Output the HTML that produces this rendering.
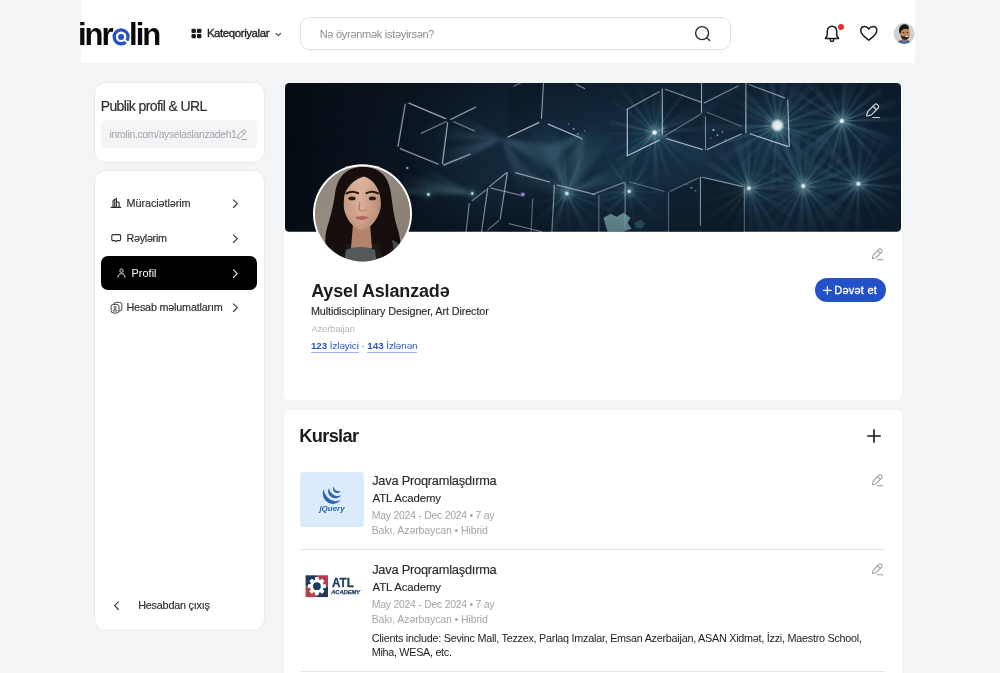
<!DOCTYPE html>
<html lang="az">
<head>
<meta charset="utf-8">
<title>inrolin – Profil</title>
<style>
*{box-sizing:border-box;margin:0;padding:0}
html,body{width:1000px;height:673px;overflow:hidden;background:#f3f4f6}
body{font-family:"Liberation Sans",sans-serif;color:#1f1f1f;position:relative}
#app{position:absolute;left:0;top:0;width:1000px;height:673px;will-change:transform}
.abs{position:absolute}
svg{position:absolute;overflow:visible}
.t{position:absolute;white-space:nowrap;line-height:1;transform-origin:0 0}
header{position:absolute;left:80.5px;top:0;width:834.5px;height:62.8px;background:#fff}
.search{position:absolute;left:300px;top:17px;width:431px;height:33px;border:1px solid #dfe0e3;border-radius:9px;background:#fff}
.card{position:absolute;background:#fff;border-radius:6px}
.side{border:1px solid #e9eaee;border-radius:12px}
.g{color:#a3a4a8}
.d{color:#2b2b2b;-webkit-text-stroke:0.15px #2b2b2b}
a{color:#2453c9;text-decoration:none;border-bottom:1px solid #9db3ea;padding-bottom:1px}
a b{font-weight:700}
.ic{fill:none;stroke:#2b2b2b;stroke-width:1.1;stroke-linecap:round;stroke-linejoin:round}
</style>
</head>
<body>
<div id="app">
<header></header>

<!-- ===== header content ===== -->
<div class="t" id="logo" style="left:78px;top:19px;font-size:31px;font-weight:700;color:#0a0a0d;letter-spacing:-2px"><span id="lg1">inr</span><span id="lg2" style="color:#2352cb;letter-spacing:0;margin:0 -1.1px 0 -0.4px">o</span><span id="lg3">lin</span></div>
<svg id="logo-o" style="left:111px;top:27px" width="20" height="20" viewBox="0 0 20 20">
  <circle cx="10.1" cy="9.8" r="9.6" fill="#fff"/>
  <circle cx="10.1" cy="9.8" r="6.95" fill="none" stroke="#2352cb" stroke-width="3.3"/>
  <path d="M13.80 13.01 L18.02 16.69" stroke="#fff" stroke-width="2.1"/>
  <circle cx="10.1" cy="9.9" r="3" fill="#2352cb"/>
</svg>
<svg style="left:191px;top:28px" width="11" height="11" viewBox="0 0 11 11">
  <rect x="0.5" y="0.7" width="4.4" height="4.2" rx="0.9" fill="#1a1a1a"/>
  <rect x="6" y="0.7" width="4.4" height="4.2" rx="0.9" fill="#1a1a1a"/>
  <rect x="0.5" y="6" width="4.4" height="4.2" rx="0.9" fill="#1a1a1a"/>
  <rect x="6" y="6" width="4.4" height="4.2" rx="0.9" fill="#1a1a1a"/>
</svg>
<div class="t" id="kat" style="left:206.9px;top:28px;font-size:11.4px;font-weight:400;-webkit-text-stroke:0.35px #222;color:#222;letter-spacing:-0.38px">Kateqoriyalar</div>
<svg style="left:275px;top:31.5px" width="7" height="5" viewBox="0 0 7 5"><path class="ic" d="M1 1.4 L3.3 3.7 L5.6 1.4" style="stroke:#444"/></svg>
<div class="search"></div>
<div class="t" id="ph" style="left:319.7px;top:29px;font-size:11.1px;color:#8e8e92;letter-spacing:-0.33px">Nə öyrənmək istəyirsən?</div>
<svg style="left:694px;top:25px" width="18" height="18" viewBox="0 0 18 18">
  <circle cx="8.1" cy="8.1" r="6.5" fill="none" stroke="#2b2b2b" stroke-width="1.4"/>
  <path d="M13.3 13.3 L15.6 15.4" stroke="#2b2b2b" stroke-width="1.4" stroke-linecap="round"/>
</svg>
<!-- bell -->
<svg style="left:823px;top:24px" width="18" height="20" viewBox="0 0 18 20">
  <path d="M9 2.3 C5.9 2.3 4.3 4.6 4.3 7.4 L4.3 10.6 C4.3 12.2 3.4 13.4 2.4 14.4 L15.6 14.4 C14.6 13.4 13.7 12.2 13.7 10.6 L13.7 7.4 C13.7 4.6 12.1 2.3 9 2.3 Z" fill="none" stroke="#1a1a1a" stroke-width="1.5" stroke-linejoin="round"/>
  <path d="M7.2 15.6 C7.4 16.9 8.1 17.5 9 17.5 C9.9 17.5 10.6 16.9 10.8 15.6" fill="none" stroke="#1a1a1a" stroke-width="1.5" stroke-linecap="round"/>
</svg>
<div class="abs" style="left:838px;top:24px;width:6px;height:6px;border-radius:50%;background:#e8302a"></div>
<!-- heart -->
<svg style="left:859px;top:24px" width="20" height="18" viewBox="0 0 20 18">
  <path d="M9.8 16.2 C6.5 13.6 1.8 10.4 1.8 6.4 C1.8 3.9 3.6 2.4 5.6 2.4 C7.3 2.4 8.8 3.3 9.8 5 C10.8 3.3 12.3 2.4 14 2.4 C16 2.4 17.8 3.9 17.8 6.4 C17.8 10.4 13.1 13.6 9.8 16.2 Z" fill="none" stroke="#1a1a1a" stroke-width="1.5" stroke-linejoin="round"/>
</svg>
<!-- header avatar -->
<svg style="left:893px;top:23px" width="22" height="22" viewBox="0 0 22 22">
  <defs><clipPath id="ca"><circle cx="11.2" cy="10.55" r="10.5"/></clipPath>
  <filter id="sf2" x="-20%" y="-20%" width="140%" height="140%"><feGaussianBlur stdDeviation="0.5"/></filter></defs>
  <g clip-path="url(#ca)">
    <rect width="22" height="22" fill="#cfd0cc"/>
    <g filter="url(#sf2)">
      <path d="M3.5 22 C4.5 17.6 8 16.6 11 16.8 C14.5 16.6 17.5 17.6 19 22 Z" fill="#466aa6"/>
      <path d="M9 14 L14 14.5 L14 18 C12.5 19 10 18.6 9 17.6 Z" fill="#a9744f"/>
      <ellipse cx="12.2" cy="10.8" rx="4.7" ry="5.8" fill="#bd875f"/>
      <path d="M7.4 11.5 C8 15 9.5 16.8 12 16.8 C14 16.8 15.6 15.6 16.4 13.4 C15 14.6 13 14.4 11.6 13.2 C10.4 14 8.6 13.4 7.4 11.5 Z" fill="#2a1d17"/>
      <path d="M12 13.4 C13.2 14.4 15 14.2 16 13 C15 13 13 13 12 13.4 Z" fill="#f2ebe6"/>
      <path d="M6.6 10.6 C5 5.6 7.4 1.4 11.4 1.2 C14.6 1 16.4 3.4 15.8 6.8 C14.4 5.6 12.4 5.6 10.4 6.2 C8.8 6.8 7.8 8.4 7.6 10.8 Z" fill="#17130f"/>
      <ellipse cx="10.6" cy="9.4" rx="0.9" ry="0.5" fill="#2a1d17"/>
      <ellipse cx="14.4" cy="9.6" rx="0.9" ry="0.5" fill="#2a1d17"/>
    </g>
  </g>
</svg>

<!-- ===== sidebar ===== -->
<div class="card side" style="left:94px;top:82px;width:171px;height:81px"></div>
<div class="t d" id="pub" style="left:100.7px;top:99px;font-size:14px;letter-spacing:-0.6px">Publik profil &amp; URL</div>
<div class="abs" style="left:101px;top:120px;width:156px;height:28px;background:#f3f4f6;border-radius:5px"></div>
<div class="t g" id="url" style="left:109.5px;top:130px;font-size:10.4px;letter-spacing:-0.33px">inrolin.com/ayselaslanzadeh1</div>
<svg class="pen" style="left:236.4px;top:128.6px" width="11.6" height="11.6" viewBox="0 0 15 15"><use href="#pencil" stroke="#98989b"/></svg>

<div class="card side" style="left:94px;top:170px;width:171px;height:461px"></div>
<!-- menu 1 -->
<svg style="left:110px;top:197px" width="12" height="12" viewBox="0 0 12 12">
  <path class="ic" d="M1.2 10.4 H10.8 M3 10.2 V3.4 L6.4 1.4 V10.2 M4.7 2.6 V10.2 M6.4 4.6 L9.1 5.6 V10.2"/>
</svg>
<div class="t d" id="m1" style="left:126.6px;top:198px;font-size:10.8px;letter-spacing:-0.07px">Müraciətlərim</div>
<svg style="left:232px;top:199px" width="7" height="10" viewBox="0 0 7 10"><path class="ic" d="M1.4 0.9 L5.3 4.7 L1.4 8.5" style="stroke:#333"/></svg>
<!-- menu 2 -->
<svg style="left:110px;top:233px" width="12" height="11" viewBox="0 0 12 11">
  <path class="ic" d="M3 1.6 H9.4 C10.2 1.6 10.6 2 10.6 2.8 V6.4 C10.6 7.2 10.2 7.6 9.4 7.6 H7.3 L6.2 8.7 L5.1 7.6 H3 C2.2 7.6 1.8 7.2 1.8 6.4 V2.8 C1.8 2 2.2 1.6 3 1.6 Z"/>
</svg>
<div class="t d" id="m2" style="left:126.5px;top:233px;font-size:10.8px;letter-spacing:-0.3px">Rəylərim</div>
<svg style="left:232px;top:234px" width="7" height="10" viewBox="0 0 7 10"><path class="ic" d="M1.4 0.9 L5.3 4.7 L1.4 8.5" style="stroke:#333"/></svg>
<!-- menu 3 active -->
<div class="abs" style="left:101px;top:256px;width:156px;height:34px;border-radius:7px;background:#000"></div>
<svg style="left:116px;top:268px" width="11" height="11" viewBox="0 0 11 11">
  <circle cx="5.5" cy="2.7" r="1.7" fill="none" stroke="#fff" stroke-width="0.9"/>
  <path d="M1.9 9.2 C1.9 7 3.4 5.7 5.5 5.7 C7.6 5.7 9.1 7 9.1 9.2" fill="none" stroke="#fff" stroke-width="0.9" stroke-linecap="round"/>
</svg>
<div class="t" id="m3" style="left:131.6px;top:268px;font-size:10.8px;color:#fff;letter-spacing:0.06px">Profil</div>
<svg style="left:232px;top:268.5px" width="7" height="10" viewBox="0 0 7 10"><path class="ic" d="M1.4 0.9 L5.3 4.7 L1.4 8.5" style="stroke:#f0f0f0"/></svg>
<!-- menu 4 -->
<svg style="left:110px;top:301px" width="13" height="13" viewBox="0 0 13 13">
  <rect x="3.9" y="1.4" width="7.9" height="8.6" rx="2.3" fill="none" stroke="#2b2b2b" stroke-width="0.9"/>
  <rect x="1.1" y="3.4" width="7.9" height="8.6" rx="2.3" fill="#fff" stroke="#2b2b2b" stroke-width="0.9"/>
  <circle cx="5.05" cy="6.4" r="1.05" fill="none" stroke="#2b2b2b" stroke-width="0.8"/>
  <path d="M3.1 10 C3.3 8.7 4.1 8.3 5.05 8.3 C6 8.3 6.8 8.7 7 10 Z" fill="none" stroke="#2b2b2b" stroke-width="0.8" stroke-linejoin="round"/>
</svg>
<div class="t d" id="m4" style="left:126.5px;top:302px;font-size:10.8px;letter-spacing:-0.2px">Hesab məlumatlarım</div>
<svg style="left:232px;top:303px" width="7" height="10" viewBox="0 0 7 10"><path class="ic" d="M1.4 0.9 L5.3 4.7 L1.4 8.5" style="stroke:#333"/></svg>
<!-- logout -->
<svg style="left:113px;top:601px" width="7" height="10" viewBox="0 0 7 10"><path class="ic" d="M5.4 0.9 L1.6 4.7 L5.4 8.5" style="stroke:#333"/></svg>
<div class="t d" id="out" style="left:138.2px;top:600px;font-size:10.8px;letter-spacing:-0.2px">Hesabdan çıxış</div>

<!-- ===== profile card ===== -->
<div class="card" style="left:284px;top:90px;width:617.8px;height:310px;border-radius:0 0 5px 5px"></div>
<svg id="banner" style="left:284.6px;top:83px;border-radius:4.5px;overflow:hidden" width="616.3" height="148.7" viewBox="0 0 617 149" preserveAspectRatio="none">
<defs>
<linearGradient id="bg" x1="0" y1="0" x2="1" y2="0"><stop offset="0" stop-color="#060b12"/><stop offset="0.12" stop-color="#09121c"/><stop offset="0.28" stop-color="#0d1a29"/><stop offset="0.5" stop-color="#112336"/><stop offset="0.8" stop-color="#13273b"/><stop offset="1" stop-color="#0e1f31"/></linearGradient>
<radialGradient id="gl"><stop offset="0" stop-color="#d5f3f6" stop-opacity="0.85"/><stop offset="0.1" stop-color="#7cc0cc" stop-opacity="0.45"/><stop offset="0.35" stop-color="#3f8496" stop-opacity="0.14"/><stop offset="1" stop-color="#2a6074" stop-opacity="0"/></radialGradient>
<radialGradient id="ray"><stop offset="0" stop-color="#a8dbe3" stop-opacity="0.5"/><stop offset="0.35" stop-color="#5fa3b4" stop-opacity="0.22"/><stop offset="1" stop-color="#3d7d90" stop-opacity="0"/></radialGradient>
<radialGradient id="core"><stop offset="0" stop-color="#fff"/><stop offset="0.55" stop-color="#f4fbfc" stop-opacity="0.95"/><stop offset="1" stop-color="#bfe6ec" stop-opacity="0"/></radialGradient>
<radialGradient id="haze"><stop offset="0" stop-color="#27506a" stop-opacity="0.5"/><stop offset="1" stop-color="#27506a" stop-opacity="0"/></radialGradient>
<linearGradient id="vg" x1="0" y1="0" x2="0" y2="1"><stop offset="0" stop-color="#060d15" stop-opacity="0.25"/><stop offset="0.4" stop-color="#060d15" stop-opacity="0"/><stop offset="1" stop-color="#060d15" stop-opacity="0.3"/></linearGradient>
</defs>
<rect width="617" height="149" fill="url(#bg)"/>
<ellipse cx="430" cy="70" rx="150" ry="100" fill="url(#haze)" opacity="0.3"/>
<ellipse cx="380" cy="75" rx="110" ry="90" fill="url(#haze)" opacity="0.4"/>
<ellipse cx="535" cy="80" rx="100" ry="100" fill="url(#haze)" opacity="0.06"/>
<ellipse cx="250" cy="65" rx="130" ry="90" fill="url(#haze)" opacity="0.5"/>
<ellipse cx="290" cy="110" rx="110" ry="60" fill="url(#haze)" opacity="0.35"/>
<ellipse cx="200" cy="100" rx="70" ry="50" fill="url(#haze)" opacity="0.3"/>
<defs>
<radialGradient id="r493" gradientUnits="userSpaceOnUse" cx="493" cy="42.5" r="82"><stop offset="0" stop-color="#c5ecf1" stop-opacity="0.8"/><stop offset="0.22" stop-color="#5f9fb3" stop-opacity="0.3"/><stop offset="1" stop-color="#3a7088" stop-opacity="0"/></radialGradient>
<radialGradient id="r370" gradientUnits="userSpaceOnUse" cx="370" cy="49.6" r="72"><stop offset="0" stop-color="#c5ecf1" stop-opacity="0.8"/><stop offset="0.22" stop-color="#5f9fb3" stop-opacity="0.3"/><stop offset="1" stop-color="#3a7088" stop-opacity="0"/></radialGradient>
<radialGradient id="r557" gradientUnits="userSpaceOnUse" cx="557.5" cy="38.1" r="72"><stop offset="0" stop-color="#c5ecf1" stop-opacity="0.8"/><stop offset="0.22" stop-color="#5f9fb3" stop-opacity="0.3"/><stop offset="1" stop-color="#3a7088" stop-opacity="0"/></radialGradient>
<radialGradient id="r464" gradientUnits="userSpaceOnUse" cx="464.5" cy="105.4" r="68"><stop offset="0" stop-color="#c5ecf1" stop-opacity="0.8"/><stop offset="0.22" stop-color="#5f9fb3" stop-opacity="0.3"/><stop offset="1" stop-color="#3a7088" stop-opacity="0"/></radialGradient>
<radialGradient id="r518" gradientUnits="userSpaceOnUse" cx="518.8" cy="103.2" r="73"><stop offset="0" stop-color="#c5ecf1" stop-opacity="0.8"/><stop offset="0.22" stop-color="#5f9fb3" stop-opacity="0.3"/><stop offset="1" stop-color="#3a7088" stop-opacity="0"/></radialGradient>
<radialGradient id="r574" gradientUnits="userSpaceOnUse" cx="574" cy="101" r="66"><stop offset="0" stop-color="#c5ecf1" stop-opacity="0.8"/><stop offset="0.22" stop-color="#5f9fb3" stop-opacity="0.3"/><stop offset="1" stop-color="#3a7088" stop-opacity="0"/></radialGradient>
<radialGradient id="r344" gradientUnits="userSpaceOnUse" cx="344.6" cy="108.5" r="46"><stop offset="0" stop-color="#c5ecf1" stop-opacity="0.8"/><stop offset="0.22" stop-color="#5f9fb3" stop-opacity="0.3"/><stop offset="1" stop-color="#3a7088" stop-opacity="0"/></radialGradient>
<radialGradient id="r282" gradientUnits="userSpaceOnUse" cx="282.1" cy="110.7" r="55"><stop offset="0" stop-color="#c5ecf1" stop-opacity="0.8"/><stop offset="0.22" stop-color="#5f9fb3" stop-opacity="0.3"/><stop offset="1" stop-color="#3a7088" stop-opacity="0"/></radialGradient>
</defs>
<filter id="bl" x="-5%" y="-20%" width="110%" height="140%"><feGaussianBlur stdDeviation="0.6"/></filter>
<g filter="url(#bl)">
<circle cx="493" cy="42.5" r="44" fill="url(#gl)"/>
<path d="M493.0 42.5L574.6 36.4L574.8 43.7Z" fill="url(#r493)" opacity="0.34"/>
<path d="M493.0 42.5L546.6 55.2L544.8 61.4Z" fill="url(#r493)" opacity="0.60"/>
<path d="M493.0 42.5L543.6 65.6L540.3 71.8Z" fill="url(#r493)" opacity="0.35"/>
<path d="M493.0 42.5L535.3 82.3L527.6 89.1Z" fill="url(#r493)" opacity="0.43"/>
<path d="M493.0 42.5L530.8 111.2L516.9 117.2Z" fill="url(#r493)" opacity="0.54"/>
<path d="M493.0 42.5L502.0 133.2L495.1 133.6Z" fill="url(#r493)" opacity="0.47"/>
<path d="M493.0 42.5L490.4 108.8L484.8 108.4Z" fill="url(#r493)" opacity="0.79"/>
<path d="M493.0 42.5L468.9 120.1L457.9 115.8Z" fill="url(#r493)" opacity="0.52"/>
<path d="M493.0 42.5L458.2 85.3L454.9 82.4Z" fill="url(#r493)" opacity="0.42"/>
<path d="M493.0 42.5L438.1 80.3L433.8 73.1Z" fill="url(#r493)" opacity="0.65"/>
<path d="M493.0 42.5L410.0 72.6L407.3 63.4Z" fill="url(#r493)" opacity="0.72"/>
<path d="M493.0 42.5L417.4 51.3L416.9 40.3Z" fill="url(#r493)" opacity="0.83"/>
<path d="M493.0 42.5L399.9 16.6L403.2 6.8Z" fill="url(#r493)" opacity="0.37"/>
<path d="M493.0 42.5L440.2 15.5L445.5 7.0Z" fill="url(#r493)" opacity="0.59"/>
<path d="M493.0 42.5L426.5 -13.4L436.1 -23.1Z" fill="url(#r493)" opacity="0.64"/>
<path d="M493.0 42.5L458.9 -34.0L467.5 -37.3Z" fill="url(#r493)" opacity="0.66"/>
<path d="M493.0 42.5L475.6 -46.1L487.2 -47.6Z" fill="url(#r493)" opacity="0.87"/>
<path d="M493.0 42.5L496.3 -12.6L504.9 -11.4Z" fill="url(#r493)" opacity="0.72"/>
<path d="M493.0 42.5L524.0 -41.4L540.0 -33.6Z" fill="url(#r493)" opacity="0.47"/>
<path d="M493.0 42.5L523.9 -1.2L530.4 4.2Z" fill="url(#r493)" opacity="0.58"/>
<path d="M493.0 42.5L536.2 8.2L539.0 12.0Z" fill="url(#r493)" opacity="0.76"/>
<path d="M493.0 42.5L557.6 15.2L560.0 21.9Z" fill="url(#r493)" opacity="0.82"/>
<circle cx="370" cy="49.6" r="32" fill="url(#gl)"/>
<path d="M370.0 49.6L436.2 40.0L436.9 48.6Z" fill="url(#r370)" opacity="0.83"/>
<path d="M370.0 49.6L424.1 65.3L420.4 74.9Z" fill="url(#r370)" opacity="0.55"/>
<path d="M370.0 49.6L442.3 90.0L433.7 102.6Z" fill="url(#r370)" opacity="0.39"/>
<path d="M370.0 49.6L406.8 89.9L402.6 93.4Z" fill="url(#r370)" opacity="0.59"/>
<path d="M370.0 49.6L385.6 92.5L381.1 93.9Z" fill="url(#r370)" opacity="0.55"/>
<path d="M370.0 49.6L378.0 131.9L366.1 132.2Z" fill="url(#r370)" opacity="0.71"/>
<path d="M370.0 49.6L352.8 119.4L342.5 116.0Z" fill="url(#r370)" opacity="0.33"/>
<path d="M370.0 49.6L323.9 114.5L313.5 105.7Z" fill="url(#r370)" opacity="0.78"/>
<path d="M370.0 49.6L332.4 81.9L328.8 77.1Z" fill="url(#r370)" opacity="0.68"/>
<path d="M370.0 49.6L321.4 72.3L319.7 68.4Z" fill="url(#r370)" opacity="0.40"/>
<path d="M370.0 49.6L324.6 52.7L324.5 49.2Z" fill="url(#r370)" opacity="0.39"/>
<path d="M370.0 49.6L324.3 41.3L325.6 36.0Z" fill="url(#r370)" opacity="0.82"/>
<path d="M370.0 49.6L324.5 18.1L327.5 14.2Z" fill="url(#r370)" opacity="0.51"/>
<path d="M370.0 49.6L319.5 -10.7L324.9 -14.8Z" fill="url(#r370)" opacity="0.90"/>
<path d="M370.0 49.6L351.6 4.4L357.7 2.3Z" fill="url(#r370)" opacity="0.36"/>
<path d="M370.0 49.6L363.6 -28.0L371.8 -28.2Z" fill="url(#r370)" opacity="0.40"/>
<path d="M370.0 49.6L378.4 -16.0L390.9 -13.1Z" fill="url(#r370)" opacity="0.39"/>
<path d="M370.0 49.6L407.3 -5.0L411.2 -2.1Z" fill="url(#r370)" opacity="0.89"/>
<path d="M370.0 49.6L414.7 16.3L419.4 23.9Z" fill="url(#r370)" opacity="0.52"/>
<path d="M370.0 49.6L429.3 20.1L433.5 30.5Z" fill="url(#r370)" opacity="0.77"/>
<circle cx="557.5" cy="38.1" r="34" fill="url(#gl)"/>
<path d="M557.5 38.1L634.4 31.8L634.6 39.4Z" fill="url(#r557)" opacity="0.89"/>
<path d="M557.5 38.1L631.6 60.5L626.6 73.0Z" fill="url(#r557)" opacity="0.74"/>
<path d="M557.5 38.1L609.4 67.0L604.9 73.8Z" fill="url(#r557)" opacity="0.32"/>
<path d="M557.5 38.1L596.2 78.0L591.8 81.9Z" fill="url(#r557)" opacity="0.72"/>
<path d="M557.5 38.1L581.1 116.7L570.9 119.0Z" fill="url(#r557)" opacity="0.89"/>
<path d="M557.5 38.1L556.0 92.2L549.7 91.6Z" fill="url(#r557)" opacity="0.44"/>
<path d="M557.5 38.1L543.0 106.4L536.5 104.7Z" fill="url(#r557)" opacity="0.84"/>
<path d="M557.5 38.1L515.9 95.6L508.7 89.6Z" fill="url(#r557)" opacity="0.78"/>
<path d="M557.5 38.1L500.2 95.3L492.0 85.7Z" fill="url(#r557)" opacity="0.77"/>
<path d="M557.5 38.1L507.9 55.3L506.1 48.6Z" fill="url(#r557)" opacity="0.77"/>
<path d="M557.5 38.1L474.7 48.0L474.2 33.5Z" fill="url(#r557)" opacity="0.54"/>
<path d="M557.5 38.1L485.2 23.5L489.3 9.9Z" fill="url(#r557)" opacity="0.40"/>
<path d="M557.5 38.1L487.1 -1.6L491.0 -7.7Z" fill="url(#r557)" opacity="0.78"/>
<path d="M557.5 38.1L498.4 -21.2L509.8 -30.7Z" fill="url(#r557)" opacity="0.69"/>
<path d="M557.5 38.1L537.2 -8.3L543.9 -10.7Z" fill="url(#r557)" opacity="0.31"/>
<path d="M557.5 38.1L558.3 -27.9L568.4 -27.0Z" fill="url(#r557)" opacity="0.86"/>
<path d="M557.5 38.1L573.7 -37.9L587.3 -33.7Z" fill="url(#r557)" opacity="0.43"/>
<path d="M557.5 38.1L585.1 -9.3L590.1 -6.1Z" fill="url(#r557)" opacity="0.65"/>
<path d="M557.5 38.1L595.0 4.1L598.9 9.0Z" fill="url(#r557)" opacity="0.85"/>
<path d="M557.5 38.1L620.2 11.1L623.2 19.4Z" fill="url(#r557)" opacity="0.84"/>
<circle cx="464.5" cy="105.4" r="30" fill="url(#gl)"/>
<path d="M464.5 105.4L526.2 98.6L526.4 110.3Z" fill="url(#r464)" opacity="0.62"/>
<path d="M464.5 105.4L521.9 122.1L520.5 126.2Z" fill="url(#r464)" opacity="0.41"/>
<path d="M464.5 105.4L509.4 127.0L505.0 134.4Z" fill="url(#r464)" opacity="0.58"/>
<path d="M464.5 105.4L498.4 149.4L491.8 153.7Z" fill="url(#r464)" opacity="0.61"/>
<path d="M464.5 105.4L482.5 149.2L474.7 151.6Z" fill="url(#r464)" opacity="0.64"/>
<path d="M464.5 105.4L471.7 177.2L464.1 177.5Z" fill="url(#r464)" opacity="0.60"/>
<path d="M464.5 105.4L446.0 180.5L433.7 176.3Z" fill="url(#r464)" opacity="0.57"/>
<path d="M464.5 105.4L430.2 157.6L423.4 152.5Z" fill="url(#r464)" opacity="0.72"/>
<path d="M464.5 105.4L418.0 145.1L412.9 138.3Z" fill="url(#r464)" opacity="0.86"/>
<path d="M464.5 105.4L391.3 133.7L387.4 119.8Z" fill="url(#r464)" opacity="0.46"/>
<path d="M464.5 105.4L390.1 111.7L390.3 97.4Z" fill="url(#r464)" opacity="0.38"/>
<path d="M464.5 105.4L419.1 97.2L420.6 91.5Z" fill="url(#r464)" opacity="0.44"/>
<path d="M464.5 105.4L399.8 72.6L405.7 62.9Z" fill="url(#r464)" opacity="0.84"/>
<path d="M464.5 105.4L416.9 56.8L425.5 49.8Z" fill="url(#r464)" opacity="0.39"/>
<path d="M464.5 105.4L447.3 56.8L457.1 54.4Z" fill="url(#r464)" opacity="0.87"/>
<path d="M464.5 105.4L457.6 25.5L468.3 25.3Z" fill="url(#r464)" opacity="0.80"/>
<path d="M464.5 105.4L476.2 43.9L483.8 45.9Z" fill="url(#r464)" opacity="0.50"/>
<path d="M464.5 105.4L499.1 44.3L505.7 48.5Z" fill="url(#r464)" opacity="0.31"/>
<path d="M464.5 105.4L498.7 77.6L502.0 82.2Z" fill="url(#r464)" opacity="0.50"/>
<path d="M464.5 105.4L507.4 89.3L509.2 95.3Z" fill="url(#r464)" opacity="0.89"/>
<circle cx="518.8" cy="103.2" r="34" fill="url(#gl)"/>
<path d="M518.8 103.2L569.1 100.7L568.6 110.6Z" fill="url(#r518)" opacity="0.46"/>
<path d="M518.8 103.2L575.3 110.1L573.3 119.6Z" fill="url(#r518)" opacity="0.38"/>
<path d="M518.8 103.2L589.1 138.4L581.3 150.9Z" fill="url(#r518)" opacity="0.46"/>
<path d="M518.8 103.2L571.3 147.6L562.0 156.7Z" fill="url(#r518)" opacity="0.72"/>
<path d="M518.8 103.2L556.4 166.3L551.4 169.0Z" fill="url(#r518)" opacity="0.56"/>
<path d="M518.8 103.2L540.7 171.1L527.3 174.0Z" fill="url(#r518)" opacity="0.78"/>
<path d="M518.8 103.2L519.7 152.0L510.9 151.4Z" fill="url(#r518)" opacity="0.82"/>
<path d="M518.8 103.2L494.6 166.9L487.5 163.7Z" fill="url(#r518)" opacity="0.86"/>
<path d="M518.8 103.2L479.2 157.4L474.7 153.7Z" fill="url(#r518)" opacity="0.44"/>
<path d="M518.8 103.2L481.4 133.6L478.8 130.1Z" fill="url(#r518)" opacity="0.42"/>
<path d="M518.8 103.2L447.8 131.0L445.1 123.0Z" fill="url(#r518)" opacity="0.47"/>
<path d="M518.8 103.2L458.9 106.0L458.9 100.4Z" fill="url(#r518)" opacity="0.31"/>
<path d="M518.8 103.2L445.2 87.8L446.5 82.5Z" fill="url(#r518)" opacity="0.63"/>
<path d="M518.8 103.2L443.9 66.8L449.4 57.3Z" fill="url(#r518)" opacity="0.36"/>
<path d="M518.8 103.2L475.3 53.8L481.8 48.8Z" fill="url(#r518)" opacity="0.80"/>
<path d="M518.8 103.2L482.7 39.3L491.6 35.0Z" fill="url(#r518)" opacity="0.89"/>
<path d="M518.8 103.2L499.8 31.5L512.8 29.3Z" fill="url(#r518)" opacity="0.68"/>
<path d="M518.8 103.2L522.1 55.0L527.6 55.7Z" fill="url(#r518)" opacity="0.38"/>
<path d="M518.8 103.2L533.9 48.9L542.7 52.2Z" fill="url(#r518)" opacity="0.40"/>
<path d="M518.8 103.2L561.2 34.6L572.7 43.2Z" fill="url(#r518)" opacity="0.70"/>
<path d="M518.8 103.2L564.5 67.8L567.8 72.6Z" fill="url(#r518)" opacity="0.58"/>
<path d="M518.8 103.2L570.8 80.7L573.2 87.5Z" fill="url(#r518)" opacity="0.88"/>
<circle cx="574" cy="101" r="30" fill="url(#gl)"/>
<path d="M574.0 101.0L624.8 101.9L624.2 109.1Z" fill="url(#r574)" opacity="0.88"/>
<path d="M574.0 101.0L615.0 110.2L613.7 114.9Z" fill="url(#r574)" opacity="0.53"/>
<path d="M574.0 101.0L615.8 127.0L611.9 132.4Z" fill="url(#r574)" opacity="0.60"/>
<path d="M574.0 101.0L605.6 133.4L602.1 136.5Z" fill="url(#r574)" opacity="0.54"/>
<path d="M574.0 101.0L596.4 149.0L592.9 150.5Z" fill="url(#r574)" opacity="0.44"/>
<path d="M574.0 101.0L577.7 169.9L568.1 169.8Z" fill="url(#r574)" opacity="0.69"/>
<path d="M574.0 101.0L559.4 155.1L549.8 151.5Z" fill="url(#r574)" opacity="0.50"/>
<path d="M574.0 101.0L531.5 154.1L526.9 150.1Z" fill="url(#r574)" opacity="0.69"/>
<path d="M574.0 101.0L522.6 154.3L513.9 144.4Z" fill="url(#r574)" opacity="0.68"/>
<path d="M574.0 101.0L530.0 117.5L527.8 109.5Z" fill="url(#r574)" opacity="0.61"/>
<path d="M574.0 101.0L503.3 107.3L503.3 94.6Z" fill="url(#r574)" opacity="0.80"/>
<path d="M574.0 101.0L509.3 85.4L513.3 73.7Z" fill="url(#r574)" opacity="0.72"/>
<path d="M574.0 101.0L533.9 76.9L535.8 74.0Z" fill="url(#r574)" opacity="0.52"/>
<path d="M574.0 101.0L529.8 57.4L538.2 50.2Z" fill="url(#r574)" opacity="0.68"/>
<path d="M574.0 101.0L552.5 45.4L561.5 42.7Z" fill="url(#r574)" opacity="0.30"/>
<path d="M574.0 101.0L572.3 40.9L582.4 41.5Z" fill="url(#r574)" opacity="0.62"/>
<path d="M574.0 101.0L594.6 35.6L599.6 37.5Z" fill="url(#r574)" opacity="0.45"/>
<path d="M574.0 101.0L606.5 41.0L612.6 44.7Z" fill="url(#r574)" opacity="0.42"/>
<path d="M574.0 101.0L620.4 63.3L626.9 73.1Z" fill="url(#r574)" opacity="0.53"/>
<path d="M574.0 101.0L638.2 74.0L641.6 84.5Z" fill="url(#r574)" opacity="0.67"/>
<circle cx="344.6" cy="108.5" r="22" fill="url(#gl)"/>
<path d="M344.6 108.5L377.7 108.4L377.6 111.1Z" fill="url(#r344)" opacity="0.45"/>
<path d="M344.6 108.5L383.8 127.9L381.4 132.1Z" fill="url(#r344)" opacity="0.31"/>
<path d="M344.6 108.5L379.2 139.3L375.8 142.7Z" fill="url(#r344)" opacity="0.72"/>
<path d="M344.6 108.5L354.3 149.8L349.8 150.6Z" fill="url(#r344)" opacity="0.58"/>
<path d="M344.6 108.5L335.7 159.6L331.4 158.7Z" fill="url(#r344)" opacity="0.42"/>
<path d="M344.6 108.5L325.2 131.2L321.3 127.1Z" fill="url(#r344)" opacity="0.58"/>
<path d="M344.6 108.5L308.1 126.6L305.3 119.2Z" fill="url(#r344)" opacity="0.46"/>
<path d="M344.6 108.5L310.4 114.5L309.9 107.9Z" fill="url(#r344)" opacity="0.65"/>
<path d="M344.6 108.5L293.3 93.6L295.9 86.7Z" fill="url(#r344)" opacity="0.38"/>
<path d="M344.6 108.5L313.1 67.5L318.9 63.6Z" fill="url(#r344)" opacity="0.72"/>
<path d="M344.6 108.5L328.8 70.0L336.2 67.7Z" fill="url(#r344)" opacity="0.31"/>
<path d="M344.6 108.5L345.6 67.8L351.0 68.2Z" fill="url(#r344)" opacity="0.48"/>
<path d="M344.6 108.5L363.1 76.1L366.7 78.4Z" fill="url(#r344)" opacity="0.80"/>
<path d="M344.6 108.5L384.3 77.2L389.0 84.3Z" fill="url(#r344)" opacity="0.37"/>
<circle cx="282.1" cy="110.7" r="26" fill="url(#gl)"/>
<path d="M282.1 110.7L344.1 111.9L343.1 121.9Z" fill="url(#r282)" opacity="0.47"/>
<path d="M282.1 110.7L344.1 130.0L341.3 137.4Z" fill="url(#r282)" opacity="0.65"/>
<path d="M282.1 110.7L315.5 138.2L311.8 142.2Z" fill="url(#r282)" opacity="0.33"/>
<path d="M282.1 110.7L305.8 147.2L299.0 150.9Z" fill="url(#r282)" opacity="0.86"/>
<path d="M282.1 110.7L287.7 160.7L282.4 161.0Z" fill="url(#r282)" opacity="0.41"/>
<path d="M282.1 110.7L265.9 170.1L254.8 165.8Z" fill="url(#r282)" opacity="0.79"/>
<path d="M282.1 110.7L240.3 158.2L232.2 149.5Z" fill="url(#r282)" opacity="0.63"/>
<path d="M282.1 110.7L229.2 131.8L227.7 127.7Z" fill="url(#r282)" opacity="0.57"/>
<path d="M282.1 110.7L238.5 111.5L238.9 104.8Z" fill="url(#r282)" opacity="0.33"/>
<path d="M282.1 110.7L237.8 89.3L239.8 85.6Z" fill="url(#r282)" opacity="0.51"/>
<path d="M282.1 110.7L231.1 71.6L238.3 63.7Z" fill="url(#r282)" opacity="0.46"/>
<path d="M282.1 110.7L261.5 63.3L266.7 61.3Z" fill="url(#r282)" opacity="0.54"/>
<path d="M282.1 110.7L277.0 69.8L280.7 69.5Z" fill="url(#r282)" opacity="0.84"/>
<path d="M282.1 110.7L303.0 52.1L308.7 54.5Z" fill="url(#r282)" opacity="0.90"/>
<path d="M282.1 110.7L309.3 80.3L311.8 82.8Z" fill="url(#r282)" opacity="0.35"/>
<path d="M282.1 110.7L319.7 91.6L321.1 94.7Z" fill="url(#r282)" opacity="0.46"/>
<circle cx="187.5" cy="110.7" r="14" fill="url(#gl)"/>
<circle cx="143.5" cy="111.6" r="12" fill="url(#gl)"/>
</g>
<filter id="bl2" x="-10%" y="-30%" width="120%" height="160%"><feGaussianBlur stdDeviation="2.2"/></filter>
<g filter="url(#bl2)">
<radialGradient id="b187_188" gradientUnits="userSpaceOnUse" cx="187.5" cy="110.7" r="75"><stop offset="0" stop-color="#9fd0dc" stop-opacity="0.55"/><stop offset="1" stop-color="#3d7d90" stop-opacity="0"/></radialGradient>
<path d="M187.5 110.7L112.5 112.0L115.8 88.8Z" fill="url(#b187_188)"/>
<radialGradient id="b187_205" gradientUnits="userSpaceOnUse" cx="187.5" cy="110.7" r="60"><stop offset="0" stop-color="#9fd0dc" stop-opacity="0.35"/><stop offset="1" stop-color="#3d7d90" stop-opacity="0"/></radialGradient>
<path d="M187.5 110.7L131.1 90.2L135.5 80.7Z" fill="url(#b187_205)"/>
<radialGradient id="b217_160" gradientUnits="userSpaceOnUse" cx="217" cy="56" r="70"><stop offset="0" stop-color="#9fd0dc" stop-opacity="0.35"/><stop offset="1" stop-color="#3d7d90" stop-opacity="0"/></radialGradient>
<path d="M217 56L156.4 91.0L148.1 68.2Z" fill="url(#b217_160)"/>
<radialGradient id="b217_185" gradientUnits="userSpaceOnUse" cx="217" cy="56" r="70"><stop offset="0" stop-color="#9fd0dc" stop-opacity="0.3"/><stop offset="1" stop-color="#3d7d90" stop-opacity="0"/></radialGradient>
<path d="M217 56L147.0 58.4L148.5 41.4Z" fill="url(#b217_185)"/>
<radialGradient id="b217_205" gradientUnits="userSpaceOnUse" cx="217" cy="56" r="55"><stop offset="0" stop-color="#9fd0dc" stop-opacity="0.25"/><stop offset="1" stop-color="#3d7d90" stop-opacity="0"/></radialGradient>
<path d="M217 56L165.0 38.1L169.9 27.7Z" fill="url(#b217_205)"/>
<radialGradient id="b143_190" gradientUnits="userSpaceOnUse" cx="143.5" cy="111.6" r="40"><stop offset="0" stop-color="#9fd0dc" stop-opacity="0.3"/><stop offset="1" stop-color="#3d7d90" stop-opacity="0"/></radialGradient>
<path d="M143.5 111.6L103.5 110.2L105.5 99.2Z" fill="url(#b143_190)"/>
<radialGradient id="b217_20" gradientUnits="userSpaceOnUse" cx="217" cy="56" r="80"><stop offset="0" stop-color="#9fd0dc" stop-opacity="0.3"/><stop offset="1" stop-color="#3d7d90" stop-opacity="0"/></radialGradient>
<path d="M217 56L296.6 64.4L283.3 100.7Z" fill="url(#b217_20)"/>
<radialGradient id="b217_60" gradientUnits="userSpaceOnUse" cx="217" cy="56" r="70"><stop offset="0" stop-color="#9fd0dc" stop-opacity="0.25"/><stop offset="1" stop-color="#3d7d90" stop-opacity="0"/></radialGradient>
<path d="M217 56L263.8 108.0L238.6 122.6Z" fill="url(#b217_60)"/>
<radialGradient id="b282_200" gradientUnits="userSpaceOnUse" cx="282" cy="110" r="70"><stop offset="0" stop-color="#9fd0dc" stop-opacity="0.3"/><stop offset="1" stop-color="#3d7d90" stop-opacity="0"/></radialGradient>
<path d="M282 110L213.1 97.8L221.4 75.0Z" fill="url(#b282_200)"/>
<radialGradient id="b282_250" gradientUnits="userSpaceOnUse" cx="282" cy="110" r="80"><stop offset="0" stop-color="#9fd0dc" stop-opacity="0.3"/><stop offset="1" stop-color="#3d7d90" stop-opacity="0"/></radialGradient>
<path d="M282 110L239.6 42.2L270.9 30.8Z" fill="url(#b282_250)"/>
<radialGradient id="b282_300" gradientUnits="userSpaceOnUse" cx="282" cy="110" r="80"><stop offset="0" stop-color="#9fd0dc" stop-opacity="0.3"/><stop offset="1" stop-color="#3d7d90" stop-opacity="0"/></radialGradient>
<path d="M282 110L306.7 33.9L335.5 50.5Z" fill="url(#b282_300)"/>
<radialGradient id="b282_340" gradientUnits="userSpaceOnUse" cx="282" cy="110" r="70"><stop offset="0" stop-color="#9fd0dc" stop-opacity="0.3"/><stop offset="1" stop-color="#3d7d90" stop-opacity="0"/></radialGradient>
<path d="M282 110L342.6 75.0L350.9 97.8Z" fill="url(#b282_340)"/>
<radialGradient id="b300_150" gradientUnits="userSpaceOnUse" cx="300" cy="50" r="70"><stop offset="0" stop-color="#9fd0dc" stop-opacity="0.3"/><stop offset="1" stop-color="#3d7d90" stop-opacity="0"/></radialGradient>
<path d="M300 50L248.0 96.8L233.4 71.6Z" fill="url(#b300_150)"/>
<radialGradient id="b300_110" gradientUnits="userSpaceOnUse" cx="300" cy="50" r="70"><stop offset="0" stop-color="#9fd0dc" stop-opacity="0.3"/><stop offset="1" stop-color="#3d7d90" stop-opacity="0"/></radialGradient>
<path d="M300 50L290.3 119.3L262.9 109.4Z" fill="url(#b300_110)"/>
</g>
<path d="M417 95L459 104L459 149L417 149Z" fill="#08131d" opacity="0.45"/>
<path d="M384 110L416 95L416 149L384 149Z" fill="#08131d" opacity="0.3"/>
<path d="M378 7L417 20L421 66L381 55Z" fill="#08131d" opacity="0.28"/>
<path d="M421 30L461 3L461 50L422 66Z" fill="#08131d" opacity="0.22"/>
<path d="M223 5L257 0L257 36L223 54Z" fill="#08131d" opacity="0.3"/>
<path d="M223 90L268 101L267 149L216 149Z" fill="#08131d" opacity="0.3"/>
<g stroke="#d9def2" stroke-width="1.15" stroke-linecap="round" fill="none">
<path d="M342.7 26.3L342.7 72.8" opacity="0.85"/>
<path d="M342.7 26.3L374.6 8.7" opacity="0.7"/>
<path d="M377.7 6.2L377.7 51" opacity="0.8"/>
<path d="M380.8 6.2L416.5 19.2" opacity="0.7"/>
<path d="M417 0L417 29.4" opacity="0.85"/>
<path d="M419.6 20L453.7 3.1" opacity="0.7"/>
<path d="M461.4 0L461.4 49.6" opacity="0.8"/>
<path d="M464.5 1.5L500.2 14.9" opacity="0.75"/>
<path d="M503.3 17L504.8 63.5" opacity="0.8"/>
<path d="M342.7 72.8L374.6 57.3" opacity="0.85"/>
<path d="M382.4 55.8L418 66.6" opacity="0.8"/>
<path d="M422.7 66.6L456.8 51.1" opacity="0.7"/>
<path d="M466 51.1L503.3 63.5" opacity="0.8"/>
<path d="M380.8 52.7L416.5 31" opacity="0.45"/>
<path d="M422.7 29.4L456.8 43.4" opacity="0.4"/>
<path d="M421 34L421 66.6" opacity="0.5"/>
<path d="M308 111.6L339 99.8" opacity="0.55"/>
<path d="M340.5 99.2L340.5 145.7" opacity="0.6"/>
<path d="M314.2 113L314.2 149" opacity="0.5"/>
<path d="M345.2 99.2L379.3 108.5" opacity="0.45"/>
<path d="M384 110L384 149" opacity="0.45"/>
<path d="M385.5 108.5L413.4 95.5" opacity="0.45"/>
<path d="M415.9 94.5L415.9 142.6" opacity="0.7"/>
<path d="M418 94.5L458.3 103.8" opacity="0.65"/>
<path d="M459.9 105.4L459.9 149" opacity="0.45"/>
<path d="M120.3 21.1L113.1 63.5" opacity="0.8"/>
<path d="M124 20.1L160.6 35.6" opacity="0.85"/>
<path d="M165.8 36.6L190.6 24.2" opacity="0.85"/>
<path d="M162.7 39.7L157.5 80.6" opacity="0.8"/>
<path d="M115.3 65.7L153.4 81.2" opacity="0.8"/>
<path d="M158.7 82.1L185.4 71.3" opacity="0.8"/>
<path d="M136.4 50.2L161.2 38.7" opacity="0.6"/>
<path d="M168.9 38.7L189.7 48" opacity="0.6"/>
<path d="M258.8 0L256.7 35.6" opacity="0.75"/>
<path d="M223.2 54.2L254.2 39.7" opacity="0.8"/>
<path d="M263.5 41.2L296 55.2" opacity="0.8"/>
<path d="M291.4 1.5L300 5.6" opacity="0.7"/>
<path d="M229 3L236 0" opacity="0.6"/>
<path d="M184.4 120.9L181.3 149" opacity="0.7"/>
<path d="M203 105.4L196.8 149" opacity="0.75"/>
<path d="M222.6 89.9L215.4 136.4" opacity="0.75"/>
<path d="M187.5 117.8L201.5 107" opacity="0.6"/>
<path d="M204.6 103.8L221.6 89.9" opacity="0.7"/>
<path d="M206.1 105.4L238.7 113.1" opacity="0.6"/>
<path d="M230.9 89.9L265 99.2" opacity="0.8"/>
<path d="M269.7 102.3L267.2 149" opacity="0.7"/>
<path d="M248 116.2L246.4 149" opacity="0.5"/>
<path d="M272.8 102.3L310 111.6" opacity="0.7"/>
<path d="M224.7 141L257.3 149" opacity="0.7"/>
<path d="M213.9 138L203 147.2" opacity="0.6"/>
</g>
<circle cx="429" cy="47" r="1.2" fill="#8fd3dc" opacity="0.8"/>
<circle cx="433" cy="52" r="1" fill="#8fd3dc" opacity="0.7"/>
<circle cx="438" cy="49" r="0.9" fill="#8fd3dc" opacity="0.6"/>
<circle cx="426" cy="55" r="0.8" fill="#8fd3dc" opacity="0.5"/>
<circle cx="441" cy="57" r="0.8" fill="#8fd3dc" opacity="0.5"/>
<circle cx="407" cy="105" r="1.1" fill="#8fd3dc" opacity="0.7"/>
<circle cx="411" cy="108" r="0.9" fill="#8fd3dc" opacity="0.6"/>
<circle cx="402" cy="102" r="0.8" fill="#8fd3dc" opacity="0.5"/>
<circle cx="289" cy="46" r="1.1" fill="#8fd3dc" opacity="0.6"/>
<circle cx="293" cy="51" r="1" fill="#8fd3dc" opacity="0.6"/>
<circle cx="284" cy="41" r="0.8" fill="#8fd3dc" opacity="0.5"/>
<circle cx="297" cy="56" r="1" fill="#8fd3dc" opacity="0.6"/>
<circle cx="300" cy="48" r="0.8" fill="#8fd3dc" opacity="0.5"/>
<circle cx="122.4" cy="85.2" r="1.3" fill="#8fd3dc" opacity="0.8"/>
<circle cx="238.1" cy="111.6" r="2.6" fill="#7a4fe0" opacity="0.6"/><circle cx="238.1" cy="111.6" r="1.2" fill="#e9dcff"/>
<path d="M319 135 L326 131 L332 134 L339 130 L346 135 L343 140 L347 146 L338 149 L323 149 L321 143 Z" fill="#a9e0e3" opacity="0.7"/>
<path d="M350 140 L356 137 L361 141 L357 146 L351 145Z" fill="#4f98a6" opacity="0.45"/>
<circle cx="493" cy="42.5" r="7.2" fill="url(#core)"/>
<circle cx="370" cy="49.6" r="2.8" fill="url(#core)"/>
<circle cx="557.5" cy="38.1" r="2.8" fill="url(#core)"/>
<circle cx="464.5" cy="105.4" r="2.6" fill="url(#core)"/>
<circle cx="518.8" cy="103.2" r="2.9" fill="url(#core)"/>
<circle cx="574" cy="101" r="2.8" fill="url(#core)"/>
<circle cx="344.6" cy="108.5" r="2.3" fill="url(#core)"/>
<circle cx="282.1" cy="110.7" r="2.5" fill="url(#core)"/>
<circle cx="187.5" cy="110.7" r="1.7" fill="url(#core)"/>
<circle cx="143.5" cy="111.6" r="1.9" fill="url(#core)"/>
<rect width="617" height="149" fill="url(#vg)"/>
</svg>
<svg class="pen" style="left:865.2px;top:103px" width="16" height="16" viewBox="0 0 15 15"><use href="#pencil" stroke="#d0d3d6"/></svg>
<!-- avatar -->
<svg id="avatar" style="left:312px;top:164px" width="101" height="100" viewBox="0 0 101 100">
  <defs>
    <clipPath id="cav"><circle cx="50.5" cy="49.8" r="47.6"/></clipPath>
    <linearGradient id="avbg" x1="0" y1="0" x2="1" y2="0.3"><stop offset="0" stop-color="#8e857a"/><stop offset="0.5" stop-color="#9a9085"/><stop offset="1" stop-color="#8a8075"/></linearGradient>
    <linearGradient id="skin" x1="0" y1="0" x2="1" y2="0"><stop offset="0" stop-color="#c3957c"/><stop offset="0.45" stop-color="#dcb09a"/><stop offset="1" stop-color="#b98a72"/></linearGradient>
    <linearGradient id="skinv" x1="0" y1="0" x2="0" y2="1"><stop offset="0" stop-color="#e3bba6" stop-opacity="0.6"/><stop offset="0.5" stop-color="#d9a98f" stop-opacity="0"/><stop offset="1" stop-color="#a87560" stop-opacity="0.45"/></linearGradient>
    <filter id="soft" x="-20%" y="-20%" width="140%" height="140%"><feGaussianBlur stdDeviation="0.45"/></filter>
  </defs>
  <circle cx="50.5" cy="49.8" r="49.5" fill="#fff"/>
  <g clip-path="url(#cav)">
    <rect x="0" y="0" width="101" height="100" fill="url(#avbg)"/>
    <g filter="url(#soft)">
      <path d="M52 3 C36 2 25 12 23 30 C21 44 18 54 15 64 C12 74 13 86 19 100 L85 100 C90 88 89 76 86 66 C82 54 81 44 79 30 C77 12 67 3 52 3 Z" fill="#14110f"/>
      <path d="M6 100 C8 88 18 82 32 80 L68 80 C82 80 92 86 95 100 Z" fill="#1a1a1c"/>
      <path d="M80 76 C86 78 90 82 93 90 L84 96 Z" fill="#4a4c4e"/>
      <path d="M41 60 L58 60 L60 84 C54 88 45 88 39 84 Z" fill="#b5826b"/>
      <path d="M34 86 C42 82 56 82 63 86 L65 100 L32 100 Z" fill="#55585a"/>
      <path d="M50.5 12 C38 12 31 21 31 35 C31 47 35 56 41.5 62 C46 66.5 54 66.5 58.5 62 C65 56 69.5 47 69.5 35 C69.5 21 63 12 50.5 12 Z" fill="url(#skin)"/>
      <path d="M50.5 12 C38 12 31 21 31 35 C31 47 35 56 41.5 62 C46 66.5 54 66.5 58.5 62 C65 56 69.5 47 69.5 35 C69.5 21 63 12 50.5 12 Z" fill="url(#skinv)"/>
      <path d="M52 5 C40 6 30 14 29 30 C28 44 27 58 23 72 C21 80 23 90 27 96 C33 90 35 80 34 68 C32 56 31 44 32 34 C33 24 42 15 52 12.5 C61 15 67 24 68.5 34 C69.5 44 69 56 67 68 C66 80 68 90 73 96 C79 90 81 80 79 70 C75 56 74 44 73 30 C71 14 63 6 52 5 Z" fill="#14110f"/>
    </g>
    <g filter="url(#soft)">
      <path d="M34.5 29.4 C38 27.2 42.5 27.4 46 29.2" stroke="#241713" stroke-width="2" fill="none" stroke-linecap="round"/>
      <path d="M54.5 29.2 C58 27.4 62.5 27.2 66 29.4" stroke="#241713" stroke-width="2" fill="none" stroke-linecap="round"/>
      <ellipse cx="40" cy="34.4" rx="3.6" ry="1.9" fill="#2a1b16"/>
      <ellipse cx="60.4" cy="34.4" rx="3.6" ry="1.9" fill="#2a1b16"/>
      <path d="M48 38 C47.5 42 47 44 46.8 45.5 C48.5 47.5 52.5 47.5 54 45.5" stroke="#b07e67" stroke-width="1.2" fill="none" stroke-linecap="round"/>
      <path d="M43 53.4 C46 52 53.5 52 56.5 53.4 C53.5 56.6 46 56.6 43 53.4 Z" fill="#b0645d"/>
    </g>
  </g>
</svg>
<svg class="pen" style="left:871px;top:248px" width="13" height="13" viewBox="0 0 15 15"><use href="#pencil" stroke="#98989b"/></svg>
<div class="t" id="name" style="left:311.2px;top:282px;font-size:18px;font-weight:700;color:#1c1c1c;letter-spacing:-0.16px">Aysel Aslanzadə</div>
<div class="t d" id="sub" style="left:310.9px;top:306px;font-size:10.8px;letter-spacing:-0.1px">Multidisciplinary Designer, Art Director</div>
<div class="t" id="az" style="left:311.4px;top:325px;font-size:9.2px;color:#b4b4b6">Azerbaijan</div>
<div class="t" id="lnk" style="left:310.9px;top:341px;font-size:9.8px;color:#2453c9;letter-spacing:-0.05px"><a href="#"><b>123</b> İzləyici</a> · <a href="#"><b>143</b> İzlənən</a></div>
<div class="abs" style="left:815px;top:278px;width:71px;height:24px;border-radius:12px;background:#2351c8"></div>
<svg style="left:822px;top:285px" width="11" height="11" viewBox="0 0 11 11"><path d="M5.4 1.7 V9.1 M1.7 5.4 H9.1" stroke="#fff" stroke-width="1.3" stroke-linecap="round"/></svg>
<div class="t" id="btn" style="left:834.3px;top:285px;font-size:11px;font-weight:400;-webkit-text-stroke:0.3px #fff;color:#fff;letter-spacing:0.22px">Dəvət et</div>

<!-- ===== courses card ===== -->
<div class="card" style="left:284px;top:410.3px;width:617.8px;height:300px;border-radius:5px"></div>
<div class="t" id="kurs" style="left:299.3px;top:427px;font-size:18.2px;font-weight:700;color:#1c1c1c;letter-spacing:-0.66px">Kurslar</div>
<svg style="left:867px;top:429px" width="14" height="14" viewBox="0 0 14 14"><path d="M7 0.8 V13.2 M0.8 7 H13.2" stroke="#1a1a1a" stroke-width="1.6" stroke-linecap="round"/></svg>

<div class="abs" style="left:300px;top:472px;width:64px;height:55px;background:#dcebfc;border-radius:3px"></div>
<svg style="left:318px;top:484px" width="30" height="30" viewBox="0 0 30 30">
  <path d="M5.8 5.2 C3.6 9.5 5.2 15.5 10 18.6 C14.5 21.3 20 19.6 23 15.8 C19.5 17.8 15 17.6 11.5 15 C8 12.4 6 9 5.8 5.2 Z" fill="#2a65b3"/>
  <path d="M11 4 C9.2 7 10.2 11 13.5 13.2 C17 15.3 21 14 23.4 11.2 C20.8 12.4 17.6 12.2 15 10.4 C12.6 8.7 11.3 6.5 11 4 Z" fill="#2a65b3"/>
  <path d="M15.6 2.2 C14.2 4.4 15 7 17.2 8.4 C19.4 9.6 21.6 8.8 23 6.9 C21.2 7.6 19.3 7.4 17.7 6.2 C16.3 5.1 15.7 3.7 15.6 2.2 Z" fill="#2a65b3"/>
  <text x="1.4" y="27.3" font-family="Liberation Sans, sans-serif" font-size="7.4" font-weight="700" font-style="italic" fill="#2a65b3" textLength="25.2" lengthAdjust="spacingAndGlyphs">jQuery</text>
</svg>
<div class="t d" id="j1" style="left:372.2px;top:475px;font-size:12.8px;letter-spacing:-0.22px">Java Proqramlaşdırma</div>
<div class="t d" id="a1" style="left:372.5px;top:493px;font-size:11.4px;letter-spacing:-0.11px">ATL Academy</div>
<div class="t g" id="d1" style="left:371.8px;top:510px;font-size:10.5px;letter-spacing:-0.28px">May 2024 - Dec 2024 • 7 ay</div>
<div class="t g" id="b1" style="left:371.7px;top:525px;font-size:10.5px;letter-spacing:-0.1px">Bakı, Azərbaycan • Hibrid</div>
<svg class="pen" style="left:871px;top:474px" width="13" height="13" viewBox="0 0 15 15"><use href="#pencil" stroke="#98989b"/></svg>
<div class="abs" style="left:300px;top:549px;width:585px;height:1px;background:#e3e4e7"></div>

<!-- ATL logo -->
<svg style="left:305px;top:575px" width="56" height="23" viewBox="0 0 56 23">
  <rect x="0.6" y="0.3" width="11.2" height="11" fill="#1f395f"/>
  <rect x="11.8" y="0.3" width="11.2" height="11" fill="#b43e49"/>
  <rect x="0.6" y="11.3" width="11.2" height="10.8" fill="#b43e49"/>
  <rect x="11.8" y="11.3" width="11.2" height="10.8" fill="#1f395f"/>
  <g transform="translate(11.9 11.2)">
    <g fill="#fff">
      <rect x="-1.9" y="-9" width="3.8" height="18" rx="0.6"/>
      <rect x="-1.9" y="-9" width="3.8" height="18" rx="0.6" transform="rotate(45)"/>
      <rect x="-1.9" y="-9" width="3.8" height="18" rx="0.6" transform="rotate(90)"/>
      <rect x="-1.9" y="-9" width="3.8" height="18" rx="0.6" transform="rotate(135)"/>
      <circle r="6.9"/>
    </g>
    <circle r="3.9" fill="#1f395f"/>
  </g>
  <text x="27" y="12.1" font-family="Liberation Sans, sans-serif" font-size="12.3" font-weight="700" fill="#1f395f" stroke="#1f395f" stroke-width="0.3" textLength="21.8" lengthAdjust="spacingAndGlyphs">ATL</text>
  <text x="26.2" y="19.3" font-family="Liberation Sans, sans-serif" font-size="5.7" font-weight="700" font-style="italic" fill="#1f395f" stroke="#1f395f" stroke-width="0.25" textLength="29" lengthAdjust="spacingAndGlyphs">ACADEMY</text>
</svg>
<div class="t d" id="j2" style="left:372.2px;top:564px;font-size:12.8px;letter-spacing:-0.22px">Java Proqramlaşdırma</div>
<div class="t d" id="a2" style="left:372.5px;top:582px;font-size:11.4px;letter-spacing:-0.11px">ATL Academy</div>
<div class="t g" id="d2" style="left:371.8px;top:599px;font-size:10.5px;letter-spacing:-0.28px">May 2024 - Dec 2024 • 7 ay</div>
<div class="t g" id="b2" style="left:371.7px;top:614px;font-size:10.5px;letter-spacing:-0.1px">Bakı, Azərbaycan • Hibrid</div>
<div class="t" id="c1" style="left:371.8px;top:633px;font-size:10.8px;color:#1c1c1c;letter-spacing:-0.25px">Clients include: Sevinc Mall, Tezzex, Parlaq Imzalar, Emsan Azerbaijan, ASAN Xidmət, İzzi, Maestro School,</div>
<div class="t" id="c2" style="left:371.7px;top:647px;font-size:10.8px;color:#1c1c1c;letter-spacing:-0.29px">Miha, WESA, etc.</div>
<svg class="pen" style="left:871px;top:563px" width="13" height="13" viewBox="0 0 15 15"><use href="#pencil" stroke="#98989b"/></svg>
<div class="abs" style="left:300px;top:671px;width:585px;height:1px;background:#e3e4e7"></div>

<!-- shared symbols -->
<svg width="0" height="0" style="left:-10px;top:-10px">
  <defs>
    <g id="pencil" fill="none" stroke-width="1.15" stroke-linecap="round" stroke-linejoin="round">
      <g transform="translate(6.6 7.2) rotate(45)">
        <path d="M-2.3 3.2 V-5.7 Q-2.3 -7.5 -0.5 -7.5 H0.5 Q2.3 -7.5 2.3 -5.7 V3.2 L0.5 6.6 Q0 7.2 -0.5 6.6 Z"/>
        <path d="M-2.3 -3.6 H2.3"/>
      </g>
      <path d="M7.4 13.6 H13.6"/>
    </g>
  </defs>
</svg>
</div>
</body>
</html>
